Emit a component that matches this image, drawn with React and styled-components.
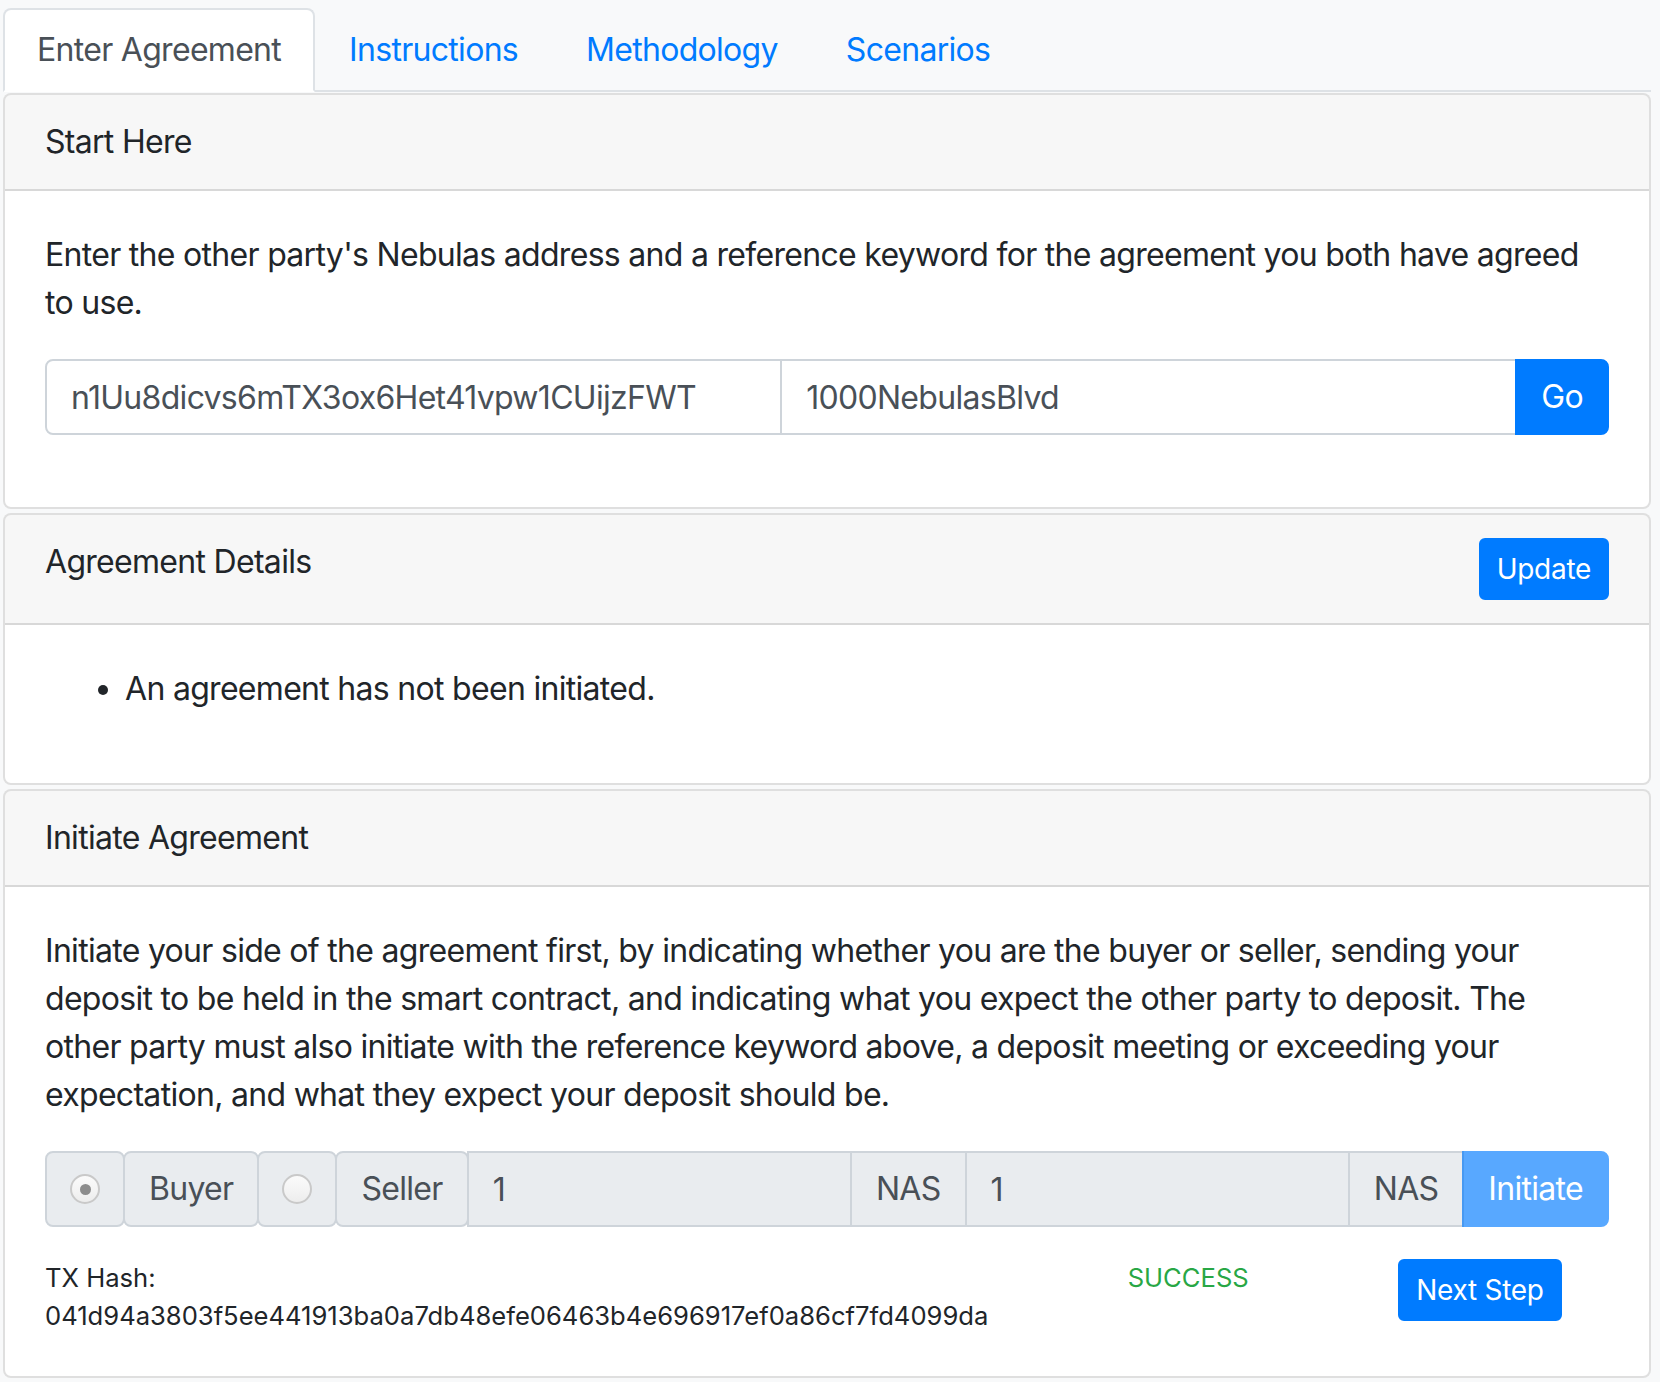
import styled, { createGlobalStyle } from "styled-components";

const GlobalStyle = createGlobalStyle`
  html, body {
    margin: 0;
    background-color: #f8f9fa;
  }
  body {
    font-family: Inter, "Liberation Sans", Arial, sans-serif;
    font-size: 32px;
    line-height: 48px;
    letter-spacing: -0.7px;
    color: #212529;
  }
  * {
    box-sizing: border-box;
  }
`;

const tabs = ["Enter Agreement", "Instructions", "Methodology", "Scenarios"];

const App = () => {
  return (
    <>
      <GlobalStyle />
      <Page>
        <TabBar>
          {tabs.map((tab, i) => (
            <Tab key={tab} active={i === 0 ? 1 : 0}>
              {tab}
            </Tab>
          ))}
        </TabBar>

        <Cards>
          <Card>
            <CardHeader>Start Here</CardHeader>
            <CardBody>
              <Paragraph>
                Enter the other party's Nebulas address and a reference keyword
                for the agreement you both have agreed to use.
              </Paragraph>
              <InputGroup>
                <TextInput
                  first={1}
                  readOnly
                  defaultValue="n1Uu8dicvs6mTX3ox6Het41vpw1CUijzFWT"
                />
                <TextInput readOnly defaultValue="1000NebulasBlvd" />
                <Button last={1}>Go</Button>
              </InputGroup>
            </CardBody>
          </Card>

          <Card>
            <CardHeader>
              <span>Agreement Details</span>
              <SmallButton>Update</SmallButton>
            </CardHeader>
            <CardBody>
              <List>
                <li>An agreement has not been initiated.</li>
              </List>
            </CardBody>
          </Card>

          <Card>
            <CardHeader>Initiate Agreement</CardHeader>
            <CardBody>
              <Paragraph>
                Initiate your side of the agreement first, by indicating whether
                you are the buyer or seller, sending your deposit to be held in
                the smart contract, and indicating what you expect the other
                party to deposit. The other party must also initiate with the
                reference keyword above, a deposit meeting or exceeding your
                expectation, and what they expect your deposit should be.
              </Paragraph>
              <InputGroup>
                <Addon rounded={1}>
                  <Radio checked={1} />
                </Addon>
                <Addon rounded={1}>Buyer</Addon>
                <Addon rounded={1}>
                  <Radio />
                </Addon>
                <Addon rounded={1}>Seller</Addon>
                <TextInput disabled={1} readOnly defaultValue="1" />
                <Addon>NAS</Addon>
                <TextInput disabled={1} readOnly defaultValue="1" />
                <Addon>NAS</Addon>
                <Button last={1} faded={1}>
                  Initiate
                </Button>
              </InputGroup>

              <ResultRow>
                <ResultCol>
                  <Small>TX Hash:</Small>
                  <Small>
                    041d94a3803f5ee441913ba0a7db48efe06463b4e696917ef0a86cf7fd4099da
                  </Small>
                </ResultCol>
                <ResultCol>
                  <Small success={1}>SUCCESS</Small>
                </ResultCol>
                <ResultCol>
                  <SmallButton>Next Step</SmallButton>
                </ResultCol>
              </ResultRow>
            </CardBody>
          </Card>
        </Cards>
      </Page>
    </>
  );
};

const Page = styled.div`
  padding: 8px 9px 0 3px;
  min-height: 1382px;
`;

const TabBar = styled.div`
  display: flex;
  border-bottom: 2px solid #dee2e6;
`;

const Tab = styled.div`
  padding: 16px 32px;
  margin-bottom: -2px;
  border: 2px solid transparent;
  border-radius: 8px 8px 0 0;
  color: ${(props) => (props.active ? "#495057" : "#007bff")};
  background-color: ${(props) => (props.active ? "#ffffff" : "transparent")};
  border-color: ${(props) =>
    props.active ? "#dee2e6 #dee2e6 #ffffff" : "transparent"};
  cursor: pointer;
`;

const Cards = styled.div`
  display: flex;
  flex-direction: column;
  gap: 4px;
  margin-top: 1px;
`;

const Card = styled.div`
  background-color: #ffffff;
  border: 2px solid rgba(0, 0, 0, 0.125);
  border-radius: 8px;
  overflow: hidden;
`;

const CardHeader = styled.div`
  display: flex;
  justify-content: space-between;
  align-items: flex-start;
  padding: 23px 40px;
  background-color: rgba(0, 0, 0, 0.03);
  border-bottom: 2px solid rgba(0, 0, 0, 0.125);
`;

const CardBody = styled.div`
  padding: 40px;
`;

const Paragraph = styled.p`
  margin: 0 0 32px;
`;

const List = styled.ul`
  margin: 0 0 30px;
  padding-left: 80px;
`;

const InputGroup = styled.div`
  display: flex;
  align-items: stretch;
  height: 76px;
  margin-bottom: 32px;

  & > * + * {
    margin-left: -2px;
  }
`;

const TextInput = styled.input`
  flex: 1;
  min-width: 0;
  height: 76px;
  padding: 12px 24px;
  font-family: inherit;
  font-size: 32px;
  line-height: 48px;
  letter-spacing: -0.7px;
  color: #495057;
  background-color: ${(props) => (props.disabled ? "#e9ecef" : "#ffffff")};
  border: 2px solid #ced4da;
  border-radius: ${(props) => (props.first ? "8px 0 0 8px" : "0")};
  outline: none;
`;

const Addon = styled.div`
  display: flex;
  align-items: center;
  padding: 12px 24px;
  color: #495057;
  background-color: #e9ecef;
  border: 2px solid #ced4da;
  border-radius: ${(props) => (props.rounded ? "8px" : "0")};
  white-space: nowrap;
`;

const Radio = styled.span`
  position: relative;
  display: block;
  width: 30px;
  height: 30px;
  margin: 0 -1px;
  border-radius: 50%;
  border: 2px solid #c9c9c9;
  background: linear-gradient(#fbfbfb, #ededed);

  &::after {
    content: "";
    display: ${(props) => (props.checked ? "block" : "none")};
    position: absolute;
    left: 50%;
    top: 50%;
    width: 11px;
    height: 11px;
    margin: -5.5px 0 0 -5.5px;
    border-radius: 50%;
    background-color: #8c8c8c;
  }
`;

const Button = styled.button`
  padding: 12px 24px;
  font-family: inherit;
  font-size: 32px;
  line-height: 48px;
  letter-spacing: -0.7px;
  color: #ffffff;
  background-color: #007bff;
  border: 2px solid #007bff;
  border-radius: ${(props) => (props.last ? "0 8px 8px 0" : "8px")};
  opacity: ${(props) => (props.faded ? 0.65 : 1)};
  cursor: pointer;
`;

const SmallButton = styled.button`
  padding: 8px 16px;
  font-family: inherit;
  font-size: 28px;
  line-height: 42px;
  letter-spacing: -0.3px;
  color: #ffffff;
  background-color: #007bff;
  border: 2px solid #007bff;
  border-radius: 6px;
  white-space: nowrap;
  cursor: pointer;
`;

const ResultRow = styled.div`
  display: grid;
  grid-template-columns: 8fr 2fr 2fr;
  margin: 0 -30px;
`;

const ResultCol = styled.div`
  display: flex;
  flex-direction: column;
  align-items: flex-start;
  padding: 0 30px;
`;

const Small = styled.span`
  font-size: 25.6px;
  line-height: 38.4px;
  letter-spacing: 0;
  color: ${(props) => (props.success ? "#28a745" : "#212529")};
`;

export default App;
